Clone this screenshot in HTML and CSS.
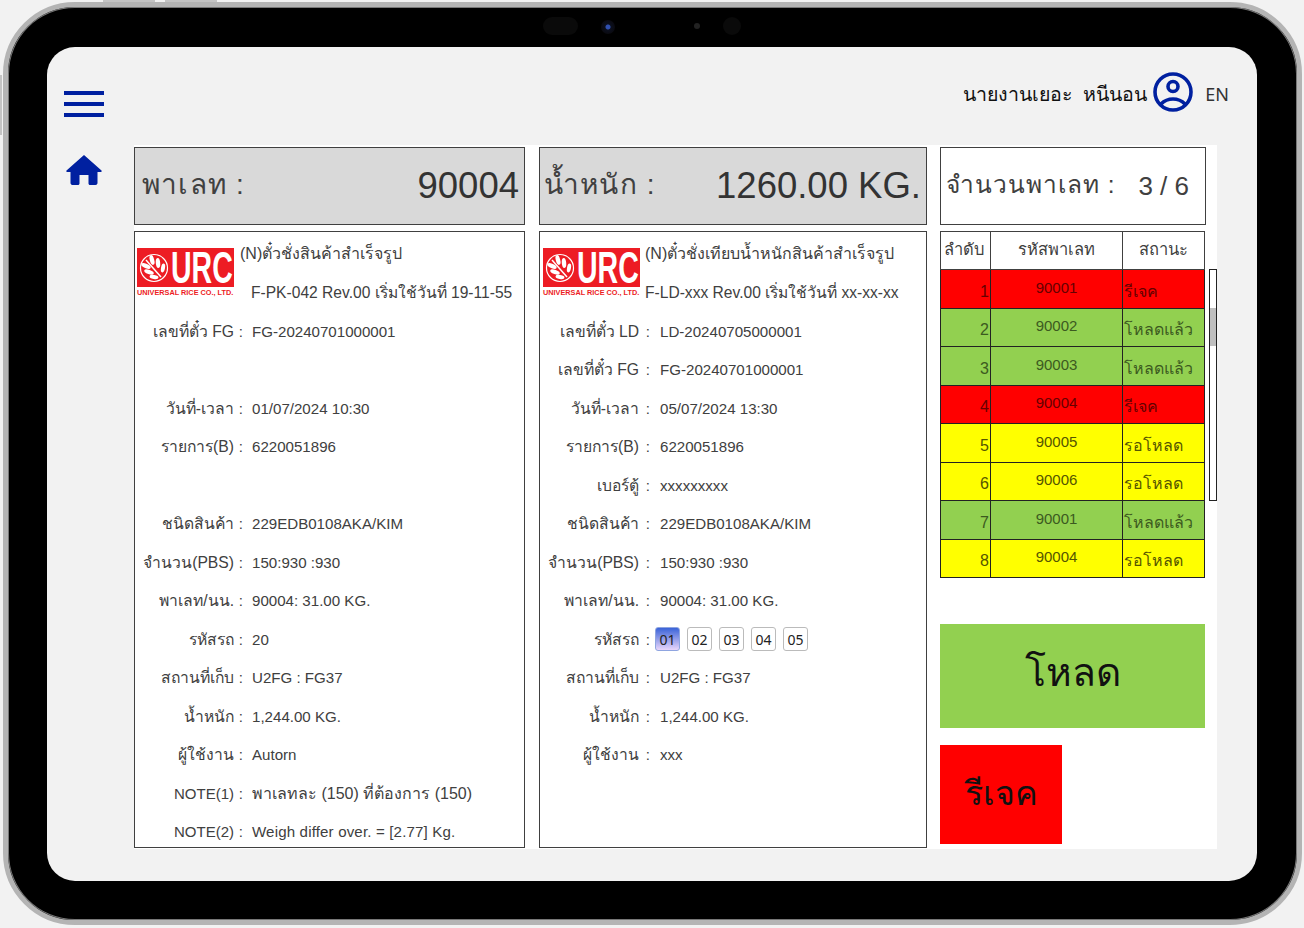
FILE: index.html
```html
<!DOCTYPE html>
<html lang="th">
<head>
  <meta charset="UTF-8" />
  <title>พาเลท</title>
  <link rel="stylesheet" href="styles.css">
</head>
<body>
  <span class="side-btn top-a"></span>
  <span class="side-btn top-b"></span>
  <span class="side-btn left-a"></span>
  <div class="device">
    <span class="lens pill"></span>
    <span class="lens cam"></span>
    <span class="lens dot"></span>
    <span class="lens round"></span>
    <div class="screen">
      <header class="topbar">
        <div class="burger"><i></i><i></i><i></i></div>
        <div class="user">
          <span class="user-name">นายงานเยอะ&nbsp; หนีนอน</span>
          <svg class="user-icon" viewBox="0 0 40 40" fill="none" stroke="#0020a0" stroke-width="3.6">
            <circle cx="20" cy="20" r="18"/>
            <circle cx="20" cy="14.500" r="5"/>
            <path d="M8 32c3-3 7-5 12-5s9 2 12 5"/>
          </svg>
          <span class="lang">EN</span>
        </div>
      </header>
      <div class="content">
        <nav class="side">
          <svg class="home" viewBox="0 0 36 30"><path fill="#0020a0" d="M18 0 35.500 15.500c.5.5.2 1.500-.6 1.500H31.500v11c0 1.100-.9 2-2 2H24c-.8 0-1.500-.7-1.500-1.500V20h-9v8.500c0 .8-.7 1.500-1.500 1.500H6.500c-1.100 0-2-.9-2-2V17H1.100c-.8 0-1.100-1-.6-1.500z"/></svg>
        </nav>
        <main class="panel">

          <section class="col col-left">
            <div class="head grey">
              <span class="head-label">พาเลท :</span>
              <span class="head-value">90004</span>
            </div>
            <div class="card">
              <div class="brand">
                <div class="logo">
                  <div class="logo-top">
                    <svg class="leaf" viewBox="0 0 30 30" fill="none" stroke="#fff"><circle cx="15" cy="15" r="13.500" stroke-width="1.200"/><path d="M7 7l15 17" stroke-width="1.500"/><g fill="#fff" stroke="none"><ellipse cx="13" cy="7" rx="2.200" ry="5" transform="rotate(-15 13 7)"/><ellipse cx="19" cy="10" rx="2.200" ry="5" transform="rotate(-5 19 10)"/><ellipse cx="24" cy="15" rx="2" ry="4.500" transform="rotate(10 24 15)"/><ellipse cx="7" cy="13" rx="2.200" ry="5" transform="rotate(-65 7 13)"/><ellipse cx="10" cy="19" rx="2.200" ry="5" transform="rotate(-70 10 19)"/><ellipse cx="15" cy="24" rx="2" ry="4.500" transform="rotate(-80 15 24)"/></g></svg>
                    <span class="logo-text">URC</span>
                  </div>
                  <div class="logo-sub">UNIVERSAL RICE CO., LTD.</div>
                </div>
                <div class="brand-text">
                  <div class="doc-title">(N)ตั๋วชั่งสินค้าสำเร็จรูป</div>
                  <div class="doc-a">F-PK-042 Rev.00 เริ่มใช้วันที่ 19-11-55</div>
                </div>
              </div>
              <div class="row"><span class="k">เลขที่ตั๋ว FG</span><span class="c">:</span><span class="v">FG-20240701000001</span></div>
              <div class="row"></div>
              <div class="row"><span class="k">วันที่-เวลา</span><span class="c">:</span><span class="v">01/07/2024 10:30</span></div>
              <div class="row"><span class="k">รายการ(B)</span><span class="c">:</span><span class="v">6220051896</span></div>
              <div class="row"></div>
              <div class="row"><span class="k">ชนิดสินค้า</span><span class="c">:</span><span class="v">229EDB0108AKA/KIM</span></div>
              <div class="row"><span class="k">จำนวน(PBS)</span><span class="c">:</span><span class="v">150:930 :930</span></div>
              <div class="row"><span class="k">พาเลท/นน.</span><span class="c">:</span><span class="v">90004: 31.00 KG.</span></div>
              <div class="row"><span class="k">รหัสรถ</span><span class="c">:</span><span class="v">20</span></div>
              <div class="row"><span class="k">สถานที่เก็บ</span><span class="c">:</span><span class="v">U2FG : FG37</span></div>
              <div class="row"><span class="k">น้ำหนัก</span><span class="c">:</span><span class="v">1,244.00 KG.</span></div>
              <div class="row"><span class="k">ผู้ใช้งาน</span><span class="c">:</span><span class="v">Autorn</span></div>
              <div class="row"><span class="k latin">NOTE(1)</span><span class="c">:</span><span class="v thai">พาเลทละ (150) ที่ต้องการ (150)</span></div>
              <div class="row"><span class="k latin">NOTE(2)</span><span class="c">:</span><span class="v note">Weigh differ over. = [2.77] Kg.</span></div>
            </div>
          </section>

          <section class="col col-mid">
            <div class="head grey">
              <span class="head-label">น้ำหนัก :</span>
              <span class="head-value">1260.00 KG.</span>
            </div>
            <div class="card wide-gap">
              <div class="brand">
                <div class="logo">
                  <div class="logo-top">
                    <svg class="leaf" viewBox="0 0 30 30" fill="none" stroke="#fff"><circle cx="15" cy="15" r="13.500" stroke-width="1.200"/><path d="M7 7l15 17" stroke-width="1.500"/><g fill="#fff" stroke="none"><ellipse cx="13" cy="7" rx="2.200" ry="5" transform="rotate(-15 13 7)"/><ellipse cx="19" cy="10" rx="2.200" ry="5" transform="rotate(-5 19 10)"/><ellipse cx="24" cy="15" rx="2" ry="4.500" transform="rotate(10 24 15)"/><ellipse cx="7" cy="13" rx="2.200" ry="5" transform="rotate(-65 7 13)"/><ellipse cx="10" cy="19" rx="2.200" ry="5" transform="rotate(-70 10 19)"/><ellipse cx="15" cy="24" rx="2" ry="4.500" transform="rotate(-80 15 24)"/></g></svg>
                    <span class="logo-text">URC</span>
                  </div>
                  <div class="logo-sub">UNIVERSAL RICE CO., LTD.</div>
                </div>
                <div class="brand-text">
                  <div class="doc-title">(N)ตั๋วชั่งเทียบน้ำหนักสินค้าสำเร็จรูป</div>
                  <div>F-LD-xxx Rev.00 เริ่มใช้วันที่ xx-xx-xx</div>
                </div>
              </div>
              <div class="row"><span class="k">เลขที่ตั๋ว LD</span><span class="c">:</span><span class="v">LD-20240705000001</span></div>
              <div class="row"><span class="k">เลขที่ตั๋ว FG</span><span class="c">:</span><span class="v">FG-20240701000001</span></div>
              <div class="row"><span class="k">วันที่-เวลา</span><span class="c">:</span><span class="v">05/07/2024 13:30</span></div>
              <div class="row"><span class="k">รายการ(B)</span><span class="c">:</span><span class="v">6220051896</span></div>
              <div class="row"><span class="k">เบอร์ตู้</span><span class="c">:</span><span class="v">xxxxxxxxx</span></div>
              <div class="row"><span class="k">ชนิดสินค้า</span><span class="c">:</span><span class="v">229EDB0108AKA/KIM</span></div>
              <div class="row"><span class="k">จำนวน(PBS)</span><span class="c">:</span><span class="v">150:930 :930</span></div>
              <div class="row"><span class="k">พาเลท/นน.</span><span class="c">:</span><span class="v">90004: 31.00 KG.</span></div>
              <div class="row">
                <span class="k">รหัสรถ</span><span class="c">:</span>
                <span class="chips">
                  <span class="chip on">01</span>
                  <span class="chip">02</span>
                  <span class="chip">03</span>
                  <span class="chip">04</span>
                  <span class="chip">05</span>
                </span>
              </div>
              <div class="row"><span class="k">สถานที่เก็บ</span><span class="c">:</span><span class="v">U2FG : FG37</span></div>
              <div class="row"><span class="k">น้ำหนัก</span><span class="c">:</span><span class="v">1,244.00 KG.</span></div>
              <div class="row"><span class="k">ผู้ใช้งาน</span><span class="c">:</span><span class="v">xxx</span></div>
            </div>
          </section>

          <section class="col col-right">
            <div class="head">
              <span class="count-label">จำนวนพาเลท :</span>
              <span class="count-value">3 / 6</span>
            </div>
            <div class="table-wrap">
              <table class="pallets">
                <thead>
                  <tr><th>ลำดับ</th><th>รหัสพาเลท</th><th>สถานะ</th></tr>
                </thead>
                <tbody>
                  <tr class="red"><td class="no">1</td><td class="code">90001</td><td class="st">รีเจค</td></tr>
                  <tr class="green"><td class="no">2</td><td class="code">90002</td><td class="st">โหลดแล้ว</td></tr>
                  <tr class="green"><td class="no">3</td><td class="code">90003</td><td class="st">โหลดแล้ว</td></tr>
                  <tr class="red"><td class="no">4</td><td class="code">90004</td><td class="st">รีเจค</td></tr>
                  <tr class="yellow"><td class="no">5</td><td class="code">90005</td><td class="st">รอโหลด</td></tr>
                  <tr class="yellow"><td class="no">6</td><td class="code">90006</td><td class="st">รอโหลด</td></tr>
                  <tr class="green"><td class="no">7</td><td class="code">90001</td><td class="st">โหลดแล้ว</td></tr>
                  <tr class="yellow"><td class="no">8</td><td class="code">90004</td><td class="st">รอโหลด</td></tr>
                </tbody>
              </table>
              <div class="scroll"><div class="thumb"></div></div>
            </div>
            <button class="btn load">โหลด</button>
            <button class="btn reject">รีเจค</button>
          </section>

        </main>
      </div>
    </div>
  </div>
</body>
</html>
```

FILE: styles.css
```css
* { box-sizing: border-box; }
body {
  margin: 0; background: #f2f2f2; height: 928px; overflow: hidden;
  font-family: 'Liberation Sans', 'Noto Sans', sans-serif; color: #404040;
}
.side-btn { position: absolute; background: #c4c4c4; }
.top-a { left: 103px; top: 0; width: 52px; height: 2px; }
.top-b { left: 165px; top: 0; width: 52px; height: 2px; }
.left-a { left: 0; top: 75px; width: 2px; height: 60px; }

.device {
  position: relative; width: 1299px; height: 923px; margin: 2px 0 0 3px;
  padding: 40px 40px 39px 39px; background: #000;
  border: 5px solid #b4b4b4; border-radius: 72px;
  box-shadow: inset 0 0 0 1px #777;
}
.lens { position: absolute; }
.pill { left: 535px; top: 10px; width: 35px; height: 18px; border-radius: 9px; background: #0a0a0a; }
.cam { left: 593px; top: 13px; width: 14px; height: 14px; border-radius: 50%; background: radial-gradient(circle, #3050b0 0 2px, #0b0f1e 3px, #0a0a10 7px); }
.dot { left: 686px; top: 16px; width: 6px; height: 6px; border-radius: 50%; background: #222; }
.round { left: 715px; top: 10px; width: 18px; height: 18px; border-radius: 50%; background: #0a0a0a; }

.screen {
  width: 1210px; height: 834px; background: #f2f2f2; border-radius: 28px; overflow: hidden;
}
.topbar {
  height: 98px; display: flex; justify-content: space-between; align-items: flex-start;
  padding: 25px 28px 0 17px;
}
.burger { display: flex; flex-direction: column; gap: 7px; margin-top: 19px; width: 40px; }
.burger i { display: block; height: 4px; background: #0020a0; }
.user { display: flex; align-items: center; height: 40px; }
.user-name { font-family: 'Noto Sans', sans-serif; font-size: 19.600px; color: #111; margin-right: 6px; padding-top: 3px; }
.user-icon { width: 40px; height: 40px; }
.lang { font-family: 'Noto Sans', sans-serif; font-size: 18px; color: #333; margin-left: 12px; padding-top: 3px; }

.content { display: flex; }
.side { width: 87px; padding: 10px 0 0 19px; }
.home { display: block; width: 36px; height: 30px; }

.panel {
  width: 1083px; height: 704px; background: #fff; padding-top: 2px;
  display: grid; grid-template-columns: 405px 401px 277px;
}
.col { display: flex; flex-direction: column; min-width: 0; }
.col-left { margin-right: 14px; }
.col-mid { margin-right: 13px; }

.head {
  height: 78px; border: 1px solid #404040; margin-bottom: 6px;
  display: flex; justify-content: space-between; align-items: center; padding: 0 5px 0 7px;
}
.grey { background: #d9d9d9; }
.col-mid .head { padding-left: 4px; }
.head-label { font-size: 28px; letter-spacing: 1.200px; margin-top: -5px; }
.head-value { font-size: 36.500px; color: #333; }

.card { height: 617px; border: 1px solid #404040; font-size: 15.100px; overflow: hidden; }
.brand { height: 80px; display: flex; padding: 16px 0 0 2px; }
.wide-gap .brand { padding-left: 3px; }
.logo { width: 97px; }
.logo-top { height: 39px; background: #ed1c24; display: flex; align-items: center; padding-left: 2px; }
.leaf { width: 30px; height: 30px; flex-shrink: 0; }
.logo-text {
  font-weight: bold; font-size: 30px; line-height: 26px; height: 26px; color: #fff; margin-left: 2px; white-space: nowrap;
  transform: scale(.95, 1.500); transform-origin: left center;
}
.logo-sub { font-size: 7.300px; line-height: 8px; font-weight: bold; color: #ed1c24; white-space: nowrap; margin-top: 2px; }
.brand-text { margin: -9px 0 0 6px; white-space: nowrap; font-size: 15.600px; }
.wide-gap .brand-text { margin-left: 5px; }
.brand-text div { height: 39px; line-height: 30px; }
.doc-title { font-size: 16px; }
.doc-a { padding-left: 11px; }

.row { height: 38.500px; display: flex; align-items: center; white-space: nowrap; }
.k { width: 99px; text-align: right; flex-shrink: 0; font-size: 15.700px; }
.k.latin { font-size: 15px; }
.c { width: 9px; text-align: right; flex-shrink: 0; font-size: 15px; }
.v { margin-left: 9px; }
.thai { font-size: 16px; }
.note { letter-spacing: .15px; }
.wide-gap .c { width: 11px; }
.wide-gap .v { margin-left: 10px; }

.chips { display: flex; gap: 7px; margin-left: 5px; }
.chip {
  width: 25px; height: 24px; border: 1px solid #bbb; border-radius: 3px;
  display: flex; align-items: center; justify-content: center;
  font-family: 'Noto Sans', sans-serif; font-size: 14px; color: #222;
}
.chip.on { background: linear-gradient(#3a63d8, #e9d6fb); border-color: #8fa5e0; }

.col-right .head { width: 266px; padding-left: 5px; }
.count-label { font-size: 24.500px; letter-spacing: 1px; white-space: nowrap; margin-top: -3px; }
.count-value { font-size: 26px; margin-right: 11px; white-space: nowrap; }
.table-wrap { display: flex; height: 393px; }
.pallets { width: 265px; height: 347px; border-collapse: collapse; table-layout: fixed; }
.pallets th { height: 38px; font-size: 16.500px; font-weight: normal; border: 1px solid #404040; background: #fff; padding: 0 0 3px; }
.pallets th:nth-child(1) { width: 50px; padding-right: 4px; }
.pallets th:nth-child(2) { width: 132px; }
.pallets td { height: 38.500px; padding: 0 1px; border: 1px solid #222; font-size: 15px; }
.pallets .no { text-align: right; vertical-align: middle; padding-top: 6px; font-size: 16px; }
.code { text-align: center; vertical-align: middle; padding-bottom: 3px !important; }
.pallets .st { white-space: nowrap; padding-top: 5px; font-size: 16px; }
.red td { background: #ff0000; color: #660000; }
.green td { background: #92d050; color: #3c5a20; }
.yellow td { background: #ffff00; color: #555500; }
.scroll { width: 8px; height: 232px; margin: 38px 0 0 4px; border: 1px solid #222; padding-top: 38px; }
.thumb { height: 38px; background: #bfbfbf; }

.btn { display: block; border: none; padding: 0; font-family: inherit; color: #111; }
.load { width: 265px; height: 104px; margin-bottom: 17px; padding-bottom: 8px; background: #92d050; font-size: 39px; }
.reject { width: 122px; height: 99px; padding-bottom: 4px; background: #ff0000; font-size: 34px; }
```
